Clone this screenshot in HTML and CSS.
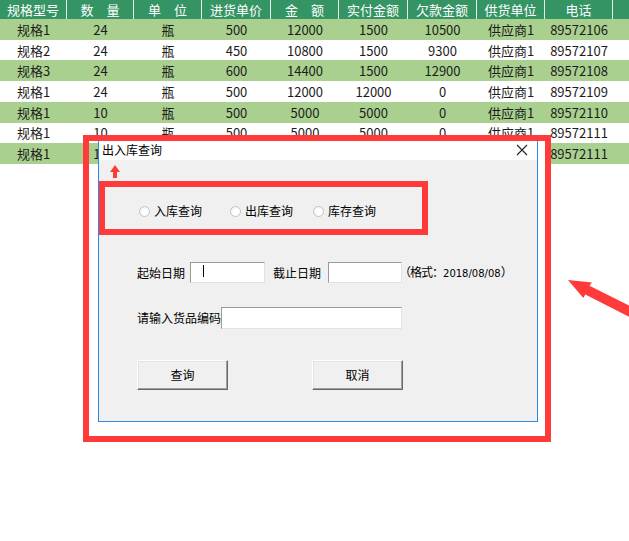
FILE: index.html
```html
<!DOCTYPE html>
<html lang="zh-CN">
<head>
<meta charset="utf-8">
<title>出入库查询</title>
<link rel="stylesheet" href="styles.css">
</head>
<body>
<div class="page">
  <div class="sheet">
    <div class="hd">规格型号</div><div class="hd">数　量</div><div class="hd">单　位</div><div class="hd">进货单价</div><div class="hd">金　额</div><div class="hd">实付金额</div><div class="hd">欠款金额</div><div class="hd">供货单位</div><div class="hd">电话</div><div class="hd"></div>

    <div class="c g">规格1</div><div class="c g">24</div><div class="c g">瓶</div><div class="c g">500</div><div class="c g">12000</div><div class="c g">1500</div><div class="c g">10500</div><div class="c g">供应商1</div><div class="c g">89572106</div><div class="c g"></div>

    <div class="c">规格2</div><div class="c">24</div><div class="c">瓶</div><div class="c">450</div><div class="c">10800</div><div class="c">1500</div><div class="c">9300</div><div class="c">供应商1</div><div class="c">89572107</div><div class="c"></div>

    <div class="c g">规格3</div><div class="c g">24</div><div class="c g">瓶</div><div class="c g">600</div><div class="c g">14400</div><div class="c g">1500</div><div class="c g">12900</div><div class="c g">供应商1</div><div class="c g">89572108</div><div class="c g"></div>

    <div class="c">规格1</div><div class="c">24</div><div class="c">瓶</div><div class="c">500</div><div class="c">12000</div><div class="c">12000</div><div class="c">0</div><div class="c">供应商1</div><div class="c">89572109</div><div class="c"></div>

    <div class="c g">规格1</div><div class="c g">10</div><div class="c g">瓶</div><div class="c g">500</div><div class="c g">5000</div><div class="c g">5000</div><div class="c g">0</div><div class="c g">供应商1</div><div class="c g">89572110</div><div class="c g"></div>

    <div class="c">规格1</div><div class="c">10</div><div class="c">瓶</div><div class="c">500</div><div class="c">5000</div><div class="c">5000</div><div class="c">0</div><div class="c">供应商1</div><div class="c">89572111</div><div class="c"></div>

    <div class="c g">规格1</div><div class="c g">10</div><div class="c g">瓶</div><div class="c g">500</div><div class="c g">5000</div><div class="c g">5000</div><div class="c g">0</div><div class="c g">供应商1</div><div class="c g">89572111</div><div class="c g"></div>
  </div>

  <div class="dialog">
    <div class="titlebar">
      <span class="title">出入库查询</span>
      <svg class="close" width="12" height="12" viewBox="0 0 12 12"><path d="M1 1 L11 11 M11 1 L1 11" stroke="#222" stroke-width="1.1" fill="none"/></svg>
    </div>
    <div class="dbody">
      <div class="radios">
        <div class="radio"><span class="dot"></span>入库查询</div>
        <div class="radio"><span class="dot"></span>出库查询</div>
        <div class="radio"><span class="dot"></span>库存查询</div>
      </div>
      <div class="row dates">
        <span class="lbl">起始日期</span>
        <div class="field f-start"><span class="caret"></span></div>
        <span class="lbl lbl2">截止日期</span>
        <div class="field f-end"></div>
        <span class="note">（格式：<span class="num">2018/08/08</span>）</span>
      </div>
      <div class="row code">
        <span class="lbl lbl-long">请输入货品编码</span>
        <div class="field f-code"></div>
      </div>
      <div class="buttons">
        <div class="btn">查询</div>
        <div class="btn">取消</div>
      </div>
    </div>
  </div>

  <div class="mark mark-outer"></div>
  <div class="mark mark-inner"></div>
  <svg class="arrows" width="629" height="541" viewBox="0 0 629 541">
    <polygon fill="#ff3a3a" points="568,280 592,282.5 589.5,285.8 639,310.4 634.3,319.4 585.3,294.5 583.3,298"/>
    <polygon fill="#ff3a3a" points="115,165 120,172 117,172 117,178 113,178 113,172 110,172"/>
  </svg>
</div>
</body>
</html>
```

FILE: styles.css
```css
html, body {
  margin: 0;
  padding: 0;
  background: #ffffff;
  overflow: hidden;
}

.page {
  position: relative;
  width: 629px;
  height: 541px;
  overflow: hidden;
  font-family: "Noto Sans CJK SC", "Noto Sans", sans-serif;
}

.sheet {
  display: grid;
  grid-template-columns: 67px 67px 68px 69px 68px 69px 69px 68px 68px 68px;
  grid-template-rows: 19px repeat(7, 20.72px);
  width: 681px;
  font-size: 13px;
  color: #1c1c1c;
}

.hd {
  background: #349463;
  color: #ffffff;
  border-right: 1px solid #e6f0ea;
  display: flex;
  align-items: center;
  justify-content: center;
  line-height: 1;
  white-space: nowrap;
}

.c {
  display: flex;
  align-items: center;
  justify-content: center;
  line-height: 1;
  white-space: nowrap;
  background: #ffffff;
}

.c.g {
  background: #a9d08e;
}

/* dialog window */
.dialog {
  position: absolute;
  left: 98px;
  top: 138px;
  width: 440px;
  height: 284px;
  box-sizing: border-box;
  border: 1px solid #2b8ae0;
  box-shadow: 7px 0 0 #ffffff;
  display: flex;
  flex-direction: column;
  font-size: 12px;
  color: #000;
  background: #f0f0f0;
}

.titlebar {
  height: 21px;
  background: #ffffff;
  display: flex;
  align-items: center;
  justify-content: space-between;
  padding: 0 9px 0 3px;
}

.title {
  line-height: 14px;
  padding-top: 1px;
}

.close {
  display: block;
}

.dbody {
  flex: 1;
  padding-left: 38px;
  display: flex;
  flex-direction: column;
}

.radios {
  margin-top: 44px;
  padding-left: 2px;
  display: grid;
  grid-template-columns: 91px 83px auto;
  height: 14px;
  line-height: 14px;
}

.radio {
  display: flex;
  align-items: center;
  gap: 4px;
}

.dot {
  width: 9px;
  height: 9px;
  border-radius: 50%;
  border: 1px solid #c4c4c4;
  background: radial-gradient(circle at 60% 60%, #ffffff 35%, #ececec 100%);
}

.row {
  display: flex;
  align-items: center;
}

.dates {
  margin-top: 44px;
  height: 21px;
}

.lbl {
  width: 48px;
  line-height: 14px;
}

.lbl2 {
  width: 48px;
  margin-left: 8px;
}

.lbl-long {
  width: 84px;
}

.field {
  box-sizing: border-box;
  height: 21px;
  background: #ffffff;
  border-top: 1px solid #9a9a9a;
  border-left: 1px solid #9a9a9a;
  border-right: 1px solid #e2e2e2;
  border-bottom: 1px solid #e2e2e2;
  position: relative;
}

.f-start {
  width: 75px;
  margin-left: 5px;
}

.caret {
  position: absolute;
  left: 12px;
  top: 2px;
  width: 1px;
  height: 12px;
  background: #000;
}

.f-end {
  width: 74px;
  margin-left: 7px;
}

.note {
  margin-left: -3px;
  letter-spacing: -1px;
  line-height: 14px;
  white-space: nowrap;
}

.num {
  font-family: "DejaVu Sans", sans-serif;
  font-size: 10px;
  letter-spacing: 0;
}

.code {
  margin-top: 24px;
  height: 22px;
}

.f-code {
  width: 181px;
  height: 22px;
}

.buttons {
  margin-top: 31px;
  display: flex;
  gap: 84px;
}

.btn {
  width: 91px;
  height: 30px;
  box-sizing: border-box;
  display: flex;
  align-items: center;
  justify-content: center;
  background: #f0f0f0;
  border-top: 1px solid #ffffff;
  border-left: 1px solid #ffffff;
  border-right: 1px solid #696969;
  border-bottom: 1px solid #696969;
  box-shadow: inset -1px -1px 0 #a0a0a0, inset 1px 1px 0 #e3e3e3;
  line-height: 14px;
}

/* red annotation marks */
.mark {
  position: absolute;
  box-sizing: border-box;
  border: 6px solid #ff3a3a;
}

.mark-outer {
  left: 83px;
  top: 135px;
  width: 468px;
  height: 307px;
}

.mark-inner {
  left: 99px;
  top: 181px;
  width: 329px;
  height: 54px;
}

.arrows {
  position: absolute;
  left: 0;
  top: 0;
  pointer-events: none;
}
```
